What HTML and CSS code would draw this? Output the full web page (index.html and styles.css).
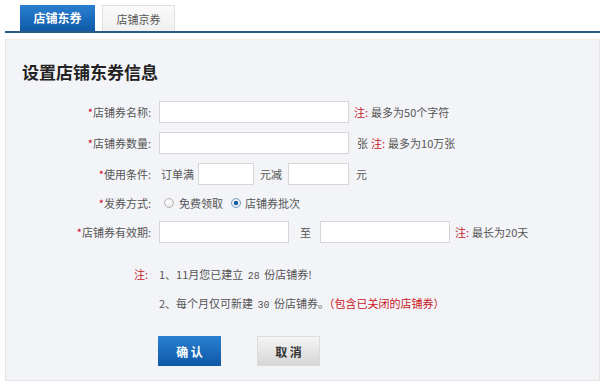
FILE: index.html
```html
<!DOCTYPE html>
<html lang="zh">
<head>
    <meta charset="UTF-8">
    <title>设置店铺东券信息</title>
    <link rel="stylesheet" href="styles.css">
</head>
<body>

<div class="tabs">
    <div class="tab active">店铺东券</div>
    <div class="tab">店铺京券</div>
</div>

<div class="panel">
    <h3 class="panel-title">设置店铺东券信息</h3>

    <div class="form-row">
        <label class="form-label"><i>*</i>店铺券名称:</label>
        <input type="text" class="form-control">
        <span class="tip"><em>注:</em>最多为50个字符</span>
    </div>

    <div class="form-row">
        <label class="form-label"><i>*</i>店铺券数量:</label>
        <input type="text" class="form-control">
        <span class="unit">张</span>
        <span class="tip tip-near"><em>注:</em>最多为10万张</span>
    </div>

    <div class="form-row">
        <label class="form-label"><i>*</i>使用条件:</label>
        <span class="text first">订单满</span>
        <input type="text" class="form-control small">
        <span class="text mid">元减</span>
        <input type="text" class="form-control small wide">
        <span class="text last">元</span>
    </div>

    <div class="form-row radio-row">
        <label class="form-label"><i>*</i>发券方式:</label>
        <span class="radio"></span><span class="radio-text">免费领取</span>
        <span class="radio checked"></span><span class="radio-text">店铺券批次</span>
    </div>

    <div class="form-row">
        <label class="form-label"><i>*</i>店铺券有效期:</label>
        <input type="text" class="form-control date">
        <span class="text to">至</span>
        <input type="text" class="form-control date">
        <span class="tip"><em>注:</em>最长为20天</span>
    </div>

    <div class="notes">
        <div class="note-line">
            <span class="form-label note-label">注:</span>
            <span>1、11月您已建立 <b>28</b> 份店铺券!</span>
        </div>
        <div class="note-line">
            <span class="form-label"></span>
            <span>2、每个月仅可新建 <b>30</b> 份店铺券。<span class="red">（包含已关闭的店铺券）</span></span>
        </div>
    </div>

    <div class="actions">
        <button class="btn btn-primary">确 认</button>
        <button class="btn btn-default">取 消</button>
    </div>
</div>

</body>
</html>
```

FILE: styles.css
```css
* {
    box-sizing: border-box;
    margin: 0;
    padding: 0;
}

body {
    font-family: "Noto Sans CJK SC", "Liberation Sans", sans-serif;
    font-size: 11px;
    color: #555;
    background: #fff;
}

.tabs {
    display: flex;
    gap: 7px;
    padding: 5px 0 0 20px;
    margin-left: 5px;
    height: 33px;
    border-bottom: 2px solid #2b5a86;
}

.tab {
    width: 73px;
    height: 26px;
    line-height: 26px;
    text-align: center;
    color: #555;
    background: linear-gradient(#fafafa, #f0f0f0);
    border: 1px solid #e0e0e0;
    border-bottom: none;
}

.tab.active {
    width: 75px;
    margin-left: -5px;
    color: #fff;
    font-size: 12px;
    font-weight: bold;
    background: linear-gradient(#2a7fd0, #0f5aa8);
    border: none;
}

.panel {
    margin: 6px 0 0 5px;
    padding: 22px 0 15px 0;
    background: #f3f4f8;
    border: 1px solid #e4e4e4;
    border-top-color: #efece0;
    height: 342px;
}

.panel-title {
    font-size: 17px;
    font-weight: bold;
    color: #222;
    line-height: 20px;
    padding-left: 16px;
    margin-bottom: 19px;
}

.form-row {
    display: flex;
    align-items: center;
    height: 22px;
    margin-bottom: 9px;
}

.radio-row {
    height: 18px;
}

.form-label {
    width: 146px;
    text-align: right;
    padding-right: 1px;
    margin-right: 7px;
    flex-shrink: 0;
}

.form-label i {
    font-style: normal;
    color: #d0021b;
}

.form-control {
    width: 190px;
    height: 22px;
    border: 1px solid #d6d6d6;
    background: #fff;
    font-family: inherit;
}

.form-control.small {
    width: 56px;
}

.form-control.wide {
    width: 61px;
}

.form-control.date {
    width: 130px;
}

.text.first {
    margin: 0 4px 0 2px;
}

.text.mid {
    margin: 0 6px 0 6px;
}

.text.last {
    margin-left: 7px;
}

.text.to {
    margin: 0 9px 0 11px;
}

.unit {
    margin-left: 8px;
}

.tip {
    margin-left: 5px;
}

.tip-near {
    margin-left: 3px;
}

.tip em {
    font-style: normal;
    color: #c8161d;
    margin-right: 3px;
}

.radio {
    width: 10px;
    height: 10px;
    border-radius: 50%;
    border: 1px solid #b8b8b8;
    background: radial-gradient(circle at 40% 35%, #fff, #dcdcdc);
    margin: 0 5px 0 5px;
}

.radio.checked {
    border-color: #7a9cc0;
    background: radial-gradient(circle, #1f5f9e 0 2px, #e8eef5 2.5px);
    margin: 0 4px 0 8px;
}

.notes {
    margin-top: 16px;
}

.note-line {
    display: flex;
    height: 29px;
    align-items: center;
}

.note-line b {
    font-weight: normal;
    font-family: "Liberation Mono", monospace;
    font-size: 10px;
    margin: 0 2px;
}

.note-label {
    color: #c8161d;
    padding-right: 4px;
}

.red {
    color: #c8161d;
}

.actions {
    display: flex;
    gap: 36px;
    margin: 19px 0 0 152px;
}

.btn {
    width: 63px;
    height: 30px;
    border: none;
    font-family: inherit;
    font-size: 12px;
    font-weight: bold;
    cursor: pointer;
}

.btn-primary {
    color: #fff;
    background: linear-gradient(#2a80d2, #0f58a6);
}

.btn-default {
    color: #333;
    background: linear-gradient(#f4f4f4, #d6d6d6);
    border: 1px solid #dcdcdc;
}
```
